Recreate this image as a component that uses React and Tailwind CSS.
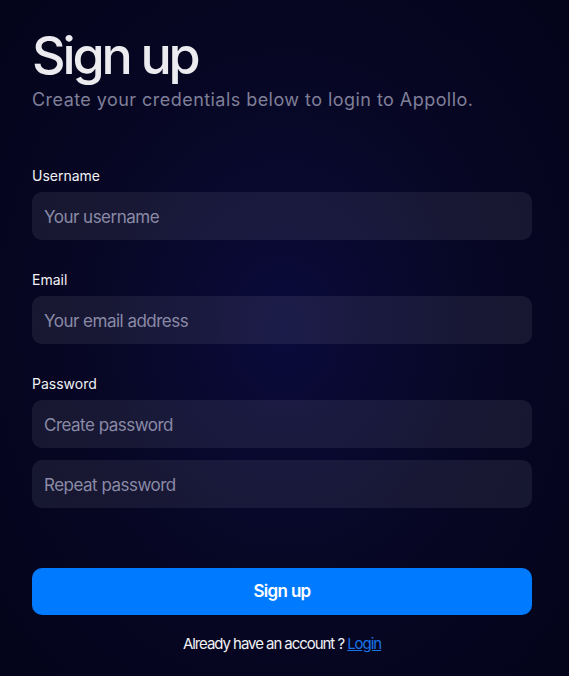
import React from "react";

function Field({ label, placeholders, type = "text" }) {
  return (
    <div className="flex flex-col">
      <label className="text-sm leading-5 text-[#f1f1f4] mb-1.5">{label}</label>
      <div className="flex flex-col gap-3">
        {placeholders.map((p) => (
          <input
            key={p}
            type={type}
            placeholder={p}
            className="h-12 w-full rounded-[10px] bg-[#ffffff]/[0.07] px-3 pt-0.5 text-[17px] tracking-[-0.03em] text-white placeholder:text-[#8a8aa6] outline-none"
          />
        ))}
      </div>
    </div>
  );
}

export default function App() {
  return (
    <div
      className="min-h-[676px] w-full bg-[radial-gradient(ellipse_at_50%_48%,#0b0b3c_0%,#070726_45%,#04041a_100%)] px-8 pt-[30px] pb-8 text-white"
      style={{ fontFamily: "Inter, 'Noto Sans', sans-serif" }}
    >
      <div className="w-[500px]">
        {/* Header */}
        <h1 className="text-[52px] leading-none font-medium tracking-[-0.06em] text-[#ececf0]">Sign up</h1>
        <p className="mt-1 text-lg leading-7 tracking-[0.025em] text-[#7f7f98]">
          Create your credentials below to login to Appollo.
        </p>

        {/* Form */}
        <form className="mt-[52px] flex flex-col gap-[30px]">
          <Field label="Username" placeholders={["Your username"]} />
          <Field label="Email" placeholders={["Your email address"]} type="email" />
          <Field label="Password" placeholders={["Create password", "Repeat password"]} type="password" />

          <button
            type="button"
            className="mt-[30px] h-[47px] w-full rounded-[10px] bg-[#007bff] text-[17px] font-semibold tracking-[-0.04em] text-white"
          >
            Sign up
          </button>
        </form>

        <p className="mt-[19px] text-center text-[15px] leading-5 tracking-[-0.07em] text-[#f1f1f4]">
          Already have an account ?{" "}
          <a href="#" className="text-[#1a73e8] underline">
            Login
          </a>
        </p>
      </div>
    </div>
  );
}
